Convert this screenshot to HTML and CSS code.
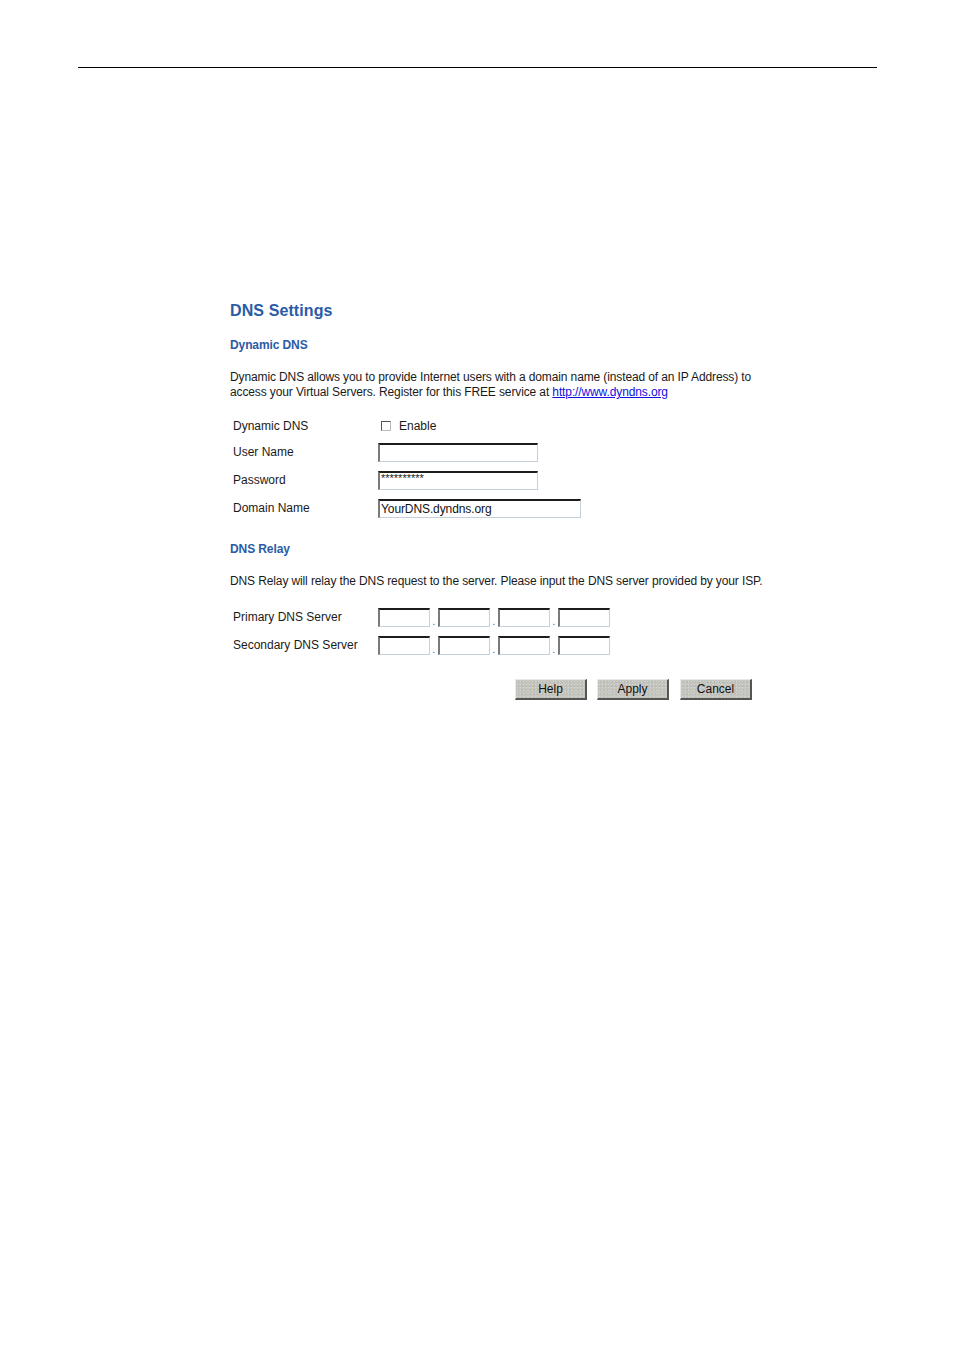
FILE: index.html
```html
<!DOCTYPE html>
<html>
<head>
<meta charset="utf-8">
<link rel="stylesheet" href="styles.css">
</head>
<body>
<div class="page">
  <div class="rule"></div>
  <div class="content">
    <h1 class="title">DNS Settings</h1>
    <h2 class="sub">Dynamic DNS</h2>
    <p class="desc">Dynamic DNS allows you to provide Internet users with a domain name (instead of an IP Address) to<br>access your Virtual Servers. Register for this FREE service at <a href="#" class="link">http://www.dyndns.org</a></p>
    <div class="form">
      <div class="row r1">
        <span class="label">Dynamic DNS</span>
        <span class="check-wrap"><span class="check"></span><span class="enable">Enable</span></span>
      </div>
      <div class="row">
        <span class="label">User Name</span>
        <span class="field w160"></span>
      </div>
      <div class="row">
        <span class="label">Password</span>
        <span class="field w160"><span class="stars">**********</span></span>
      </div>
      <div class="row">
        <span class="label">Domain Name</span>
        <span class="field w203"><span class="val">YourDNS.dyndns.org</span></span>
      </div>
    </div>
    <h2 class="sub sub2">DNS Relay</h2>
    <p class="desc desc2">DNS Relay will relay the DNS request to the server. Please input the DNS server provided by your ISP.</p>
    <div class="form form2">
      <div class="row ip-row">
        <span class="label">Primary DNS Server</span>
        <span class="ip"><span class="field oct"></span><span class="dot">.</span><span class="field oct"></span><span class="dot">.</span><span class="field oct"></span><span class="dot">.</span><span class="field oct"></span></span>
      </div>
      <div class="row ip-row">
        <span class="label">Secondary DNS Server</span>
        <span class="ip"><span class="field oct"></span><span class="dot">.</span><span class="field oct"></span><span class="dot">.</span><span class="field oct"></span><span class="dot">.</span><span class="field oct"></span></span>
      </div>
    </div>
    <div class="buttons">
      <span class="btn">Help</span>
      <span class="btn">Apply</span>
      <span class="btn">Cancel</span>
    </div>
  </div>
</div>
</body>
</html>
```
FILE: styles.css
```css
html, body {
  margin: 0;
  padding: 0;
  background: #ffffff;
}
body {
  font-family: "Liberation Sans", Arial, sans-serif;
  color: #000000;
}
.page {
  padding-top: 67px;
}
.rule {
  margin-left: 78px;
  width: 799px;
  height: 1px;
  background: #000000;
}
.content {
  margin-left: 230px;
  padding-top: 233px;
  width: 560px;
}
.title {
  margin: 0;
  font-size: 16px;
  font-weight: bold;
  color: #2a5ba6;
  line-height: 20px;
  letter-spacing: 0.1px;
}
.sub {
  margin: 17px 0 0 0;
  font-size: 12px;
  font-weight: bold;
  color: #2a5ba6;
  line-height: 14px;
  letter-spacing: -0.1px;
}
.sub2 {
  margin-top: 20px;
}
.desc {
  margin: 18px 0 0 0;
  font-size: 12px;
  line-height: 15px;
  color: #1a1a1a;
  letter-spacing: -0.12px;
}
.desc2 {
  margin-top: 18px;
}
.link {
  color: #1010e0;
  text-decoration: underline;
}
.form {
  margin-top: 14px;
  margin-left: 3px;
  display: flex;
  flex-direction: column;
}
.form2 {
  margin-top: 14px;
}
.row {
  display: flex;
  align-items: center;
  height: 28px;
  font-size: 12px;
  color: #1a1a1a;
}
.r1 { height: 24px; }
.label {
  width: 145px;
  flex: none;
}
.check-wrap {
  display: flex;
  align-items: center;
  gap: 8px;
  margin-left: 3px;
}
.check {
  width: 8px;
  height: 8px;
  border-top: 1px solid #555;
  border-left: 1px solid #555;
  border-right: 1px solid #bbb;
  border-bottom: 1px solid #bbb;
  background: #fff;
}
.field {
  display: inline-block;
  height: 16px;
  box-sizing: content-box;
  border-top: 2px solid #1c1c1c;
  border-left: 2px solid #7a7a7a;
  border-right: 1px solid #c4d0dc;
  border-bottom: 1px solid #c4d0dc;
  background: #fff;
  font-size: 12px;
  line-height: 16px;
  overflow: hidden;
  white-space: nowrap;
}
.w160 { width: 157px; }
.w203 { width: 200px; }
.stars {
  display: block;
  font-size: 11px;
  line-height: 10px;
  padding-left: 1px;
}
.val {
  padding-left: 1px;
  color: #111;
  letter-spacing: -0.1px;
}
.ip {
  display: flex;
  align-items: flex-end;
}
.oct {
  width: 49px;
}
.dot {
  width: 8px;
  text-align: center;
  font-size: 10px;
  line-height: 10px;
  color: #555;
}
.buttons {
  margin-top: 20px;
  margin-left: 285px;
  display: flex;
  gap: 10px;
}
.btn {
  display: inline-block;
  box-sizing: border-box;
  width: 72px;
  height: 21px;
  background: #c6c6c0;
  background-image: radial-gradient(circle, #d8d8d2 0.6px, transparent 0.8px), radial-gradient(circle, #b0b0aa 0.6px, transparent 0.8px);
  background-size: 3px 3px, 4px 4px;
  border-top: 1px solid #e8e8e8;
  border-left: 1px solid #e8e8e8;
  border-right: 2px solid #555;
  border-bottom: 2px solid #555;
  text-align: center;
  font-size: 12px;
  line-height: 18px;
  color: #111;
}
.btn:last-child {
  margin-left: 1px;
}
```
